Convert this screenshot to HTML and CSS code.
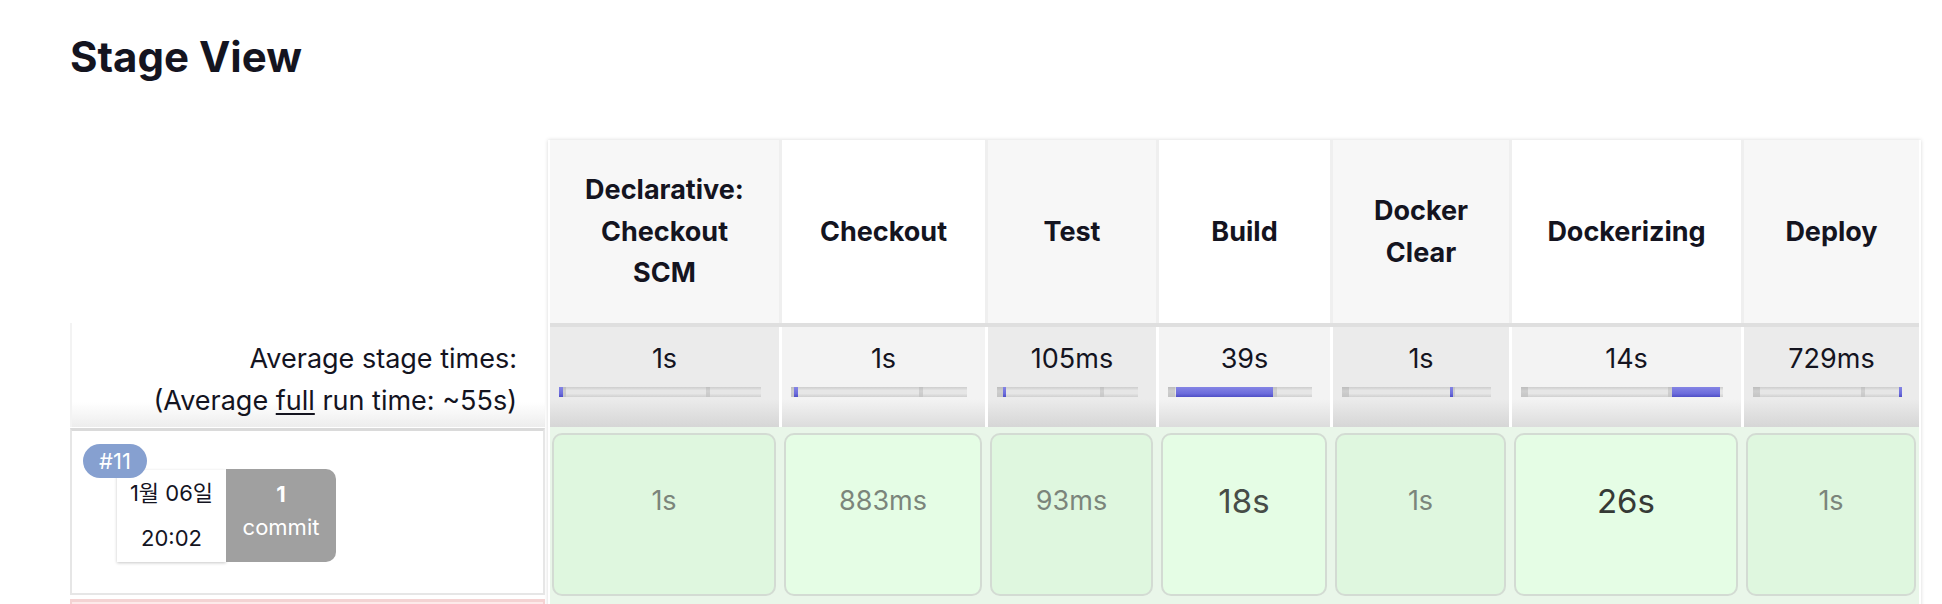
FILE: index.html
```html
<!DOCTYPE html>
<html lang="ko">
<head>
<meta charset="utf-8">
<title>Stage View</title>
<link rel="stylesheet" href="styles.css">
</head>
<body>
<div class="page">
  <h1 class="title">Stage View</h1>
  <div class="stage-view">
    <div class="labels">
      <div class="label-head"></div>
      <div class="label-avg">
        <div>Average stage times:</div>
        <div>(Average <span class="u">full</span> run time: ~55s)</div>
      </div>
      <div class="label-build">
        <div class="label-box">
          <span class="badge">#11</span>
          <div class="build-meta">
            <div class="date"><div>1월 06일</div><div>20:02</div></div>
            <div class="commit"><div class="commit-count">1</div><div>commit</div></div>
          </div>
        </div>
      </div>
      <div class="label-build">
        <div class="label-box failed"></div>
      </div>
    </div>

    <div class="stages">
      <div class="row head">
        <div class="cell">Declarative:<br>Checkout<br>SCM</div>
        <div class="cell">Checkout</div>
        <div class="cell">Test</div>
        <div class="cell">Build</div>
        <div class="cell">Docker Clear</div>
        <div class="cell">Dockerizing</div>
        <div class="cell">Deploy</div>
      </div>

      <div class="row avg">
        <div class="cell"><div class="avg-time">1s</div><div class="bar"><span class="tick"></span><span class="fill" style="left:0%;width:2.2%"></span></div></div>
        <div class="cell"><div class="avg-time">1s</div><div class="bar"><span class="tick"></span><span class="fill" style="left:1.7%;width:2.4%"></span></div></div>
        <div class="cell"><div class="avg-time">105ms</div><div class="bar"><span class="tick"></span><span class="fill" style="left:4.3%;width:1.6%"></span></div></div>
        <div class="cell"><div class="avg-time">39s</div><div class="bar"><span class="tick"></span><span class="fill" style="left:5.5%;width:67.5%"></span></div></div>
        <div class="cell"><div class="avg-time">1s</div><div class="bar"><span class="tick"></span><span class="fill" style="left:72.5%;width:2%"></span></div></div>
        <div class="cell"><div class="avg-time">14s</div><div class="bar"><span class="tick"></span><span class="fill" style="left:74.6%;width:24%"></span></div></div>
        <div class="cell"><div class="avg-time">729ms</div><div class="bar"><span class="tick"></span><span class="fill" style="left:98.5%;width:1.5%"></span></div></div>
      </div>

      <div class="row build">
        <div class="cell"><div class="box">1s</div></div>
        <div class="cell"><div class="box">883ms</div></div>
        <div class="cell"><div class="box">93ms</div></div>
        <div class="cell"><div class="box big">18s</div></div>
        <div class="cell"><div class="box">1s</div></div>
        <div class="cell"><div class="box big darker">26s</div></div>
        <div class="cell"><div class="box">1s</div></div>
      </div>

      <div class="row build">
        <div class="cell"><div class="box"></div></div>
        <div class="cell"><div class="box"></div></div>
        <div class="cell"><div class="box"></div></div>
        <div class="cell"><div class="box"></div></div>
        <div class="cell"><div class="box"></div></div>
        <div class="cell failed"><div class="box"></div></div>
        <div class="cell failed"><div class="box"></div></div>
      </div>
    </div>
  </div>
</div>
</body>
</html>
```

FILE: styles.css
```css
* {
  box-sizing: border-box;
}

html,
body {
  margin: 0;
  padding: 0;
  overflow: hidden;
  background: #ffffff;
}

body {
  font-family: Inter, "Noto Sans CJK KR", "Noto Sans", sans-serif;
  color: #14141f;
}

.page {
  padding: 32px 0 0 70px;
}

.title {
  margin: 0;
  font-size: 42px;
  line-height: 50px;
  font-weight: 700;
  color: #14141f;
}

.stage-view {
  display: flex;
  align-items: flex-start;
  margin-top: 58px;
}

/* ---------- left label column ---------- */

.labels {
  width: 475px;
  flex: none;
  display: grid;
  grid-template-rows: 183px 104px 171px 171px;
}

.label-avg {
  padding: 15px 28px 0 0;
  text-align: right;
  font-size: 27px;
  line-height: 41.5px;
  border-left: 2px solid #f3f3f3;
  background: linear-gradient(#ffffff 76%, #ededed);
}

.u {
  text-decoration: underline;
  text-underline-offset: 3px;
  text-decoration-thickness: 2px;
}

.label-build {
  padding: 1px 0 3px 0;
}

.label-box {
  position: relative;
  height: 100%;
  background: #ffffff;
  border: 2px solid #e6e6e6;
  border-top: 3px solid #dadada;
}

.label-box.failed {
  background: #fdeaea;
  border-color: #f4d3d3;
}

.badge {
  position: absolute;
  left: 11px;
  top: 13px;
  z-index: 2;
  width: 64px;
  height: 34px;
  border-radius: 17px;
  background: #86a0d0;
  color: #ffffff;
  font-size: 22px;
  line-height: 34px;
  text-align: center;
}

.build-meta {
  display: flex;
  align-items: flex-start;
  padding: 38px 0 0 45px;
}

.date {
  width: 109px;
  height: 92px;
  margin-top: 1px;
  padding-top: 1px;
  background: #ffffff;
  box-shadow: 0 1px 3px rgba(0, 0, 0, 0.22);
  text-align: center;
  font-size: 22px;
  line-height: 45px;
  color: #14141f;
}

.commit {
  width: 110px;
  height: 93px;
  padding-top: 9px;
  background: #a0a0a0;
  color: #ffffff;
  border-radius: 0 10px 10px 0;
  text-align: center;
  font-size: 22px;
  line-height: 33px;
}

.commit-count {
  font-weight: 700;
}

/* ---------- stage table ---------- */

.stages {
  margin-left: 3px;
  padding: 0 2px;
  display: grid;
  grid-template-rows: 183px 104px 171px 171px;
  box-shadow: 0 0 4px rgba(0, 0, 0, 0.16);
  background: #ffffff;
}

.row {
  display: grid;
  grid-template-columns: 229px 203px 168px 171px 176px 229px 175px;
  column-gap: 3px;
}

.head {
  background: #efefef;
}

.head .cell {
  display: flex;
  align-items: center;
  justify-content: center;
  padding: 0 10px;
  text-align: center;
  font-size: 27px;
  line-height: 41.7px;
  font-weight: 700;
  background: #f7f7f7;
}

.head .cell:nth-child(even) {
  background: #ffffff;
}

.avg {
  background: #ffffff;
  border-top: 4px solid #dfdfdf;
}

.avg .cell {
  padding-top: 11px;
  text-align: center;
  background: linear-gradient(#ebebeb 72%, #d6d6d6);
}

.avg .cell:nth-child(even) {
  background: linear-gradient(#f3f3f3 72%, #dcdcdc);
}

.avg-time {
  font-size: 27px;
  line-height: 41.5px;
}

.bar {
  position: relative;
  height: 10px;
  margin: 7px 18px 0 9px;
  background: linear-gradient(#cdcdcd, #e6e6e6 35%, #e6e6e6 65%, #d0d0d0);
}

.bar::before {
  content: "";
  position: absolute;
  left: 0;
  top: 0;
  bottom: 0;
  width: 7px;
  background: linear-gradient(#bdbdbd, #cfcfcf 40%, #c4c4c4);
}

.tick {
  position: absolute;
  left: 73%;
  top: 0;
  bottom: 0;
  width: 4px;
  background: linear-gradient(#c0c0c0, #d2d2d2 40%, #c6c6c6);
}

.fill {
  position: absolute;
  top: 0;
  bottom: 0;
  min-width: 3px;
  background: linear-gradient(#8484e4, #6c6cdc 65%, #4f4fc6);
}

.build {
  padding: 6px 0 2px;
  background: #e9f6e9;
}

.build .cell {
  padding: 0 3px 0 2px;
  background: #e9f6e9;
}

.box {
  height: 163px;
  padding-top: 46px;
  border: 2px solid #d3dbd3;
  border-radius: 10px;
  background: #dff7df;
  text-align: center;
  font-size: 27px;
  line-height: 40px;
  color: #7b857b;
}

.build .cell:nth-child(even) .box {
  background: #e5fde5;
}

.box.big {
  font-size: 33px;
  color: #474d47;
}

.box.darker {
  color: #363a36;
}

.build .cell.failed {
  background: #ffffff;
}

.build .cell.failed .box {
  border-color: #d24a3a;
  background: #fde3e3;
}
```
